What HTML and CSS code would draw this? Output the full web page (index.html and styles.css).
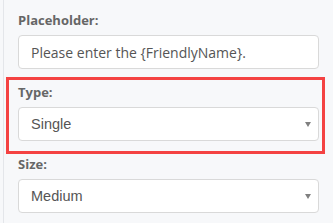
FILE: index.html
```html
<!DOCTYPE html>
<html>
<head>
    <title>Field Properties</title>
    <link rel="stylesheet" href="styles.css">
</head>
<body>
    <div class="panel">
        <div class="field">
            <label for="placeholder">Placeholder:</label>
            <input type="text" id="placeholder" value="Please enter the {FriendlyName}.">
        </div>
        <div class="field highlight">
            <label for="type">Type:</label>
            <div class="select-wrap">
                <select id="type">
                    <option>Single</option>
                    <option>Multiple</option>
                </select>
            </div>
        </div>
        <div class="field">
            <label for="size">Size:</label>
            <div class="select-wrap">
                <select id="size">
                    <option>Small</option>
                    <option selected>Medium</option>
                    <option>Large</option>
                </select>
            </div>
        </div>
    </div>
</body>
</html>
```
FILE: styles.css
```css
html, body { margin: 0; padding: 0; background: #f7f8fa; }
body { width: 333px; height: 223px; overflow: hidden; font-family: "Open Sans", sans-serif; }
.panel { margin-left: 3px; border-left: 1px solid #e4e6ea; padding: 12px 14px 0 14px; height: 223px; box-sizing: border-box; }
.field { position: relative; margin-bottom: 15px; }
.field label { display: block; font-size: 13px; line-height: 17px; font-weight: 700; color: #666; margin-bottom: 6px; }
.field input, .field select { display: block; width: 100%; height: 34px; box-sizing: border-box; border: 1px solid #d9d9d9; border-radius: 4px; background: #fff; color: #555; font-size: 14px; padding: 0 12px; outline: none; }
.field input { font-family: "Open Sans", sans-serif; }
.field select { font-family: "Liberation Sans", Arial, sans-serif; font-size: 14.5px; -webkit-appearance: none; appearance: none; }
.select-wrap { position: relative; }
.select-wrap::after { content: ""; position: absolute; right: 8px; top: 15px; border-left: 3px solid transparent; border-right: 3px solid transparent; border-top: 5px solid #808080; pointer-events: none; }
.highlight::after { content: ""; position: absolute; top: -7px; bottom: -13px; left: -12px; right: -6px; border: 3px solid #f44242; pointer-events: none; }
```
